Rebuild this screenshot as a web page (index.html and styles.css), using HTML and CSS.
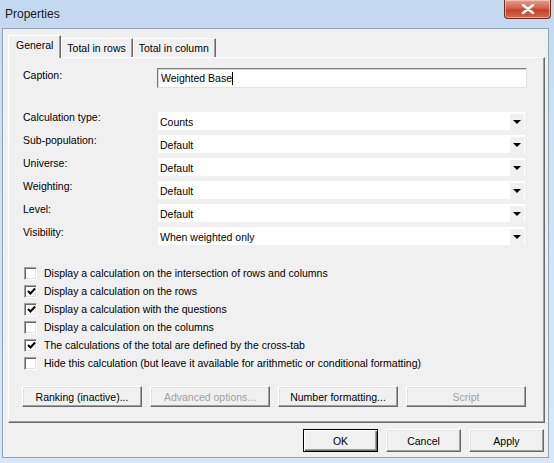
FILE: index.html
```html
<!DOCTYPE html>
<html>
<head>
<meta charset="utf-8">
<title>Properties</title>
<link rel="stylesheet" href="styles.css">
</head>
<body>
<div class="window">
  <div class="titlebar">
    <span class="title">Properties</span>
    <div class="close">
      <svg width="16" height="10" viewBox="0 0 16 10"><path d="M3 1 L13 9 M13 1 L3 9" stroke="#fff" stroke-width="2.6" stroke-linecap="round"/></svg>
    </div>
  </div>
  <div class="client">
    <div class="tabs">
      <div class="tab active">General</div>
      <div class="tab">Total in rows</div>
      <div class="tab">Total in column</div>
    </div>
    <div class="panel">
      <div class="caption-row">
        <span class="label">Caption:</span>
        <div class="textbox">Weighted Base<span class="caret"></span></div>
      </div>
      <div class="fields">
        <span class="label">Calculation type:</span>
        <div class="combo"><span>Counts</span><i class="arrow"></i></div>
        <span class="label">Sub-population:</span>
        <div class="combo"><span>Default</span><i class="arrow"></i></div>
        <span class="label">Universe:</span>
        <div class="combo"><span>Default</span><i class="arrow"></i></div>
        <span class="label">Weighting:</span>
        <div class="combo"><span>Default</span><i class="arrow"></i></div>
        <span class="label">Level:</span>
        <div class="combo"><span>Default</span><i class="arrow"></i></div>
        <span class="label">Visibility:</span>
        <div class="combo"><span>When weighted only</span><i class="arrow"></i></div>
      </div>
      <div class="checks">
        <label class="check"><span class="box"></span>Display a calculation on the intersection of rows and columns</label>
        <label class="check"><span class="box on"><svg width="9" height="9" viewBox="0 0 9 9"><path d="M1 4 L3.5 6.5 L8 1.5" fill="none" stroke="#000" stroke-width="2"/></svg></span>Display a calculation on the rows</label>
        <label class="check"><span class="box on"><svg width="9" height="9" viewBox="0 0 9 9"><path d="M1 4 L3.5 6.5 L8 1.5" fill="none" stroke="#000" stroke-width="2"/></svg></span>Display a calculation with the questions</label>
        <label class="check"><span class="box"></span>Display a calculation on the columns</label>
        <label class="check"><span class="box on"><svg width="9" height="9" viewBox="0 0 9 9"><path d="M1 4 L3.5 6.5 L8 1.5" fill="none" stroke="#000" stroke-width="2"/></svg></span>The calculations of the total are defined by the cross-tab</label>
        <label class="check"><span class="box"></span>Hide this calculation (but leave it available for arithmetic or conditional formatting)</label>
      </div>
      <div class="panel-buttons">
        <button class="btn wide">Ranking (inactive)...</button>
        <button class="btn wide" disabled>Advanced options...</button>
        <button class="btn wide">Number formatting...</button>
        <button class="btn wide" disabled>Script</button>
      </div>
    </div>
    <div class="footer">
      <button class="btn small default">OK</button>
      <button class="btn small">Cancel</button>
      <button class="btn small">Apply</button>
    </div>
  </div>
</div>
</body>
</html>
```

FILE: styles.css
```css
* { box-sizing: border-box; }

html, body {
  margin: 0;
  padding: 0;
}

body {
  width: 554px;
  height: 463px;
  overflow: hidden;
  font-family: "Liberation Sans", Arial, sans-serif;
  font-size: 10.5px;
  color: #000;
}

.window {
  width: 554px;
  height: 463px;
  background: linear-gradient(180deg, #c2d8ef 0%, #cfe0f3 30%, #d9e7f6 100%);
  display: flex;
  flex-direction: column;
  padding: 0 5px 5px 2px;
}

/* caption bar */
.titlebar {
  height: 28px;
  display: flex;
  align-items: flex-start;
  justify-content: space-between;
  padding-left: 3px;
}

.title {
  font-family: "Liberation Sans", Arial, sans-serif;
  font-size: 12px;
  color: #1a1a1a;
  margin-top: 7px;
}

.close {
  width: 47px;
  height: 19px;
  margin-right: -2px;
  border: 1px solid #6b2a22;
  border-top: none;
  border-radius: 0 0 4px 4px;
  background: linear-gradient(180deg, #e8a08f 0%, #d4614a 45%, #c0432c 55%, #cf6a4d 100%);
  box-shadow: inset 0 0 0 1px rgba(255, 220, 210, 0.55);
  display: flex;
  align-items: center;
  justify-content: center;
}

/* dialog body */
.client {
  flex: 1;
  background: #f0f0f0;
  border: 1px solid #8da2bb;
  display: flex;
  flex-direction: column;
  padding: 6px 4px 0 5px;
}

.tabs {
  display: flex;
  align-items: flex-end;
  height: 22px;
  position: relative;
  z-index: 1;
}

.tab {
  height: 19px;
  line-height: 18px;
  padding: 0 6px 0 5px;
  border-top: 1px solid #fff;
  border-left: 1px solid #fff;
  border-right: 1px solid #696969;
  box-shadow: inset -1px 0 0 #a0a0a0;
  background: #f0f0f0;
  white-space: nowrap;
}

.tab.active {
  height: 23px;
  line-height: 19px;
  padding: 0 7px 0 7px;
  margin-bottom: -1px;
}

.panel {
  width: 537px;
  height: 366px;
  border-top: 1px solid #fff;
  border-left: 1px solid #fff;
  border-right: 1px solid #696969;
  border-bottom: 1px solid #696969;
  box-shadow: inset -1px -1px 0 #a0a0a0;
  padding: 10px 0 0 14px;
  display: flex;
  flex-direction: column;
}

.label {
  white-space: nowrap;
}

.caption-row {
  display: grid;
  grid-template-columns: 134px 370px;
  align-items: center;
  height: 20px;
}

.caption-row .label {
  margin-top: -6px;
}

.textbox {
  height: 20px;
  background: #fff;
  border-top: 1px solid #7a7a7a;
  border-left: 1px solid #7a7a7a;
  border-right: 1px solid #e3e3e3;
  border-bottom: 1px solid #e3e3e3;
  box-shadow: inset 1px 1px 0 #d6d6d6;
  padding: 0 0 0 3px;
  line-height: 18px;
  display: flex;
  align-items: center;
}

.caret {
  display: inline-block;
  width: 1px;
  height: 13px;
  background: #000;
}

.fields {
  display: grid;
  grid-template-columns: 135px 367px;
  grid-auto-rows: 18px;
  row-gap: 5px;
  margin-top: 24px;
}

.fields .label {
  line-height: 13px;
  margin-top: -1px;
}

.combo {
  background: #fff;
  display: flex;
  align-items: center;
  justify-content: space-between;
  padding-left: 2px;
  line-height: 18px;
  padding-top: 1px;
}

.arrow {
  width: 14px;
  height: 16px;
  margin-right: 1px;
  background: #f0f0f0;
  display: flex;
  align-items: center;
  justify-content: center;
}

.arrow::before {
  content: "";
  border-left: 4px solid transparent;
  border-right: 4px solid transparent;
  border-top: 4px solid #000;
  margin-top: 1px;
}

.checks {
  display: flex;
  flex-direction: column;
  margin-top: 19px;
  margin-left: 1px;
}

.check {
  display: flex;
  align-items: center;
  height: 18px;
  white-space: nowrap;
}

.box {
  width: 13px;
  height: 13px;
  margin-right: 7px;
  background: #fff;
  border-top: 1px solid #a0a0a0;
  border-left: 1px solid #a0a0a0;
  border-right: 1px solid #fff;
  border-bottom: 1px solid #fff;
  box-shadow: inset 1px 1px 0 #696969, inset -1px -1px 0 #e3e3e3;
  display: flex;
  align-items: center;
  justify-content: center;
}

.box svg {
  display: block;
  margin-left: 1px;
  margin-top: 1px;
}

.panel-buttons {
  display: flex;
  gap: 8px;
  margin-top: 14px;
  margin-left: -1px;
}

.btn {
  font-family: "Liberation Sans", Arial, sans-serif;
  font-size: 10.5px;
  color: #000;
  background: #f0f0f0;
  border-top: 1px solid #fff;
  border-left: 1px solid #fff;
  border-right: 1px solid #696969;
  border-bottom: 1px solid #696969;
  box-shadow: inset -1px -1px 0 #a0a0a0, inset 1px 1px 0 #e3e3e3;
  padding: 0;
  margin: 0;
  white-space: nowrap;
}

.btn:disabled {
  color: #a0a0a0;
}

.btn.wide {
  width: 120px;
  height: 21px;
}

.footer {
  display: flex;
  justify-content: flex-end;
  gap: 8px;
  margin-top: 6px;
}

.btn.small {
  width: 75px;
  height: 23px;
}

.btn.default {
  border: 1px solid #000;
  box-shadow: inset 1px 1px 0 #fff, inset -1px -1px 0 #696969, inset -2px -2px 0 #a0a0a0;
}
```
